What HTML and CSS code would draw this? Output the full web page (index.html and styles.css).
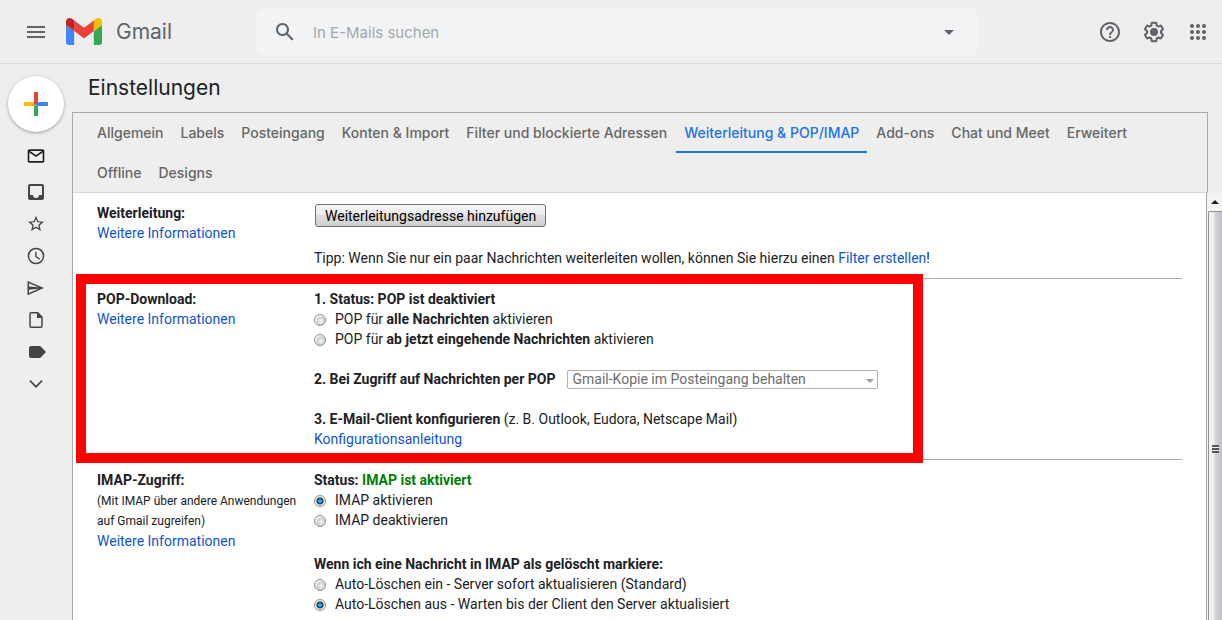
FILE: index.html
```html
<!DOCTYPE html>
<html lang="de">
<head>
<meta charset="utf-8">
<title>Einstellungen – Gmail</title>
<link rel="stylesheet" href="styles.css">
</head>
<body>
<header class="topbar">
  <button class="icon-btn menu-btn" type="button" aria-label="Hauptmenü"><svg width="24" height="24" viewBox="0 0 24 24"><path d="M3 18h18v-2H3v2zm0-5h18v-2H3v2zm0-7v2h18V6H3z"/></svg></button>
  <a class="brand" href="#">
    <svg width="36" height="27" viewBox="52 42 88 66" aria-hidden="true"><path fill="#4285f4" d="M58 108h14V74L52 59v43c0 3.320 2.690 6 6 6"/><path fill="#34a853" d="M120 108h14c3.320 0 6-2.690 6-6V59l-20 15"/><path fill="#fbbc04" d="M120 48v26l20-15v-8c0-7.420-8.470-11.650-14.400-7.200"/><path fill="#ea4335" d="M72 74V48l24 18 24-18v26L96 92"/><path fill="#c5221f" d="M52 51v8l20 15V48l-5.600-4.200c-5.940-4.450-14.400-.22-14.400 7.200"/></svg>
    <span class="brand-name">Gmail</span>
  </a>
  <form class="search">
    <button class="icon-btn" type="button" aria-label="Suchen"><svg width="24" height="24" viewBox="0 0 24 24"><path d="M20.490 19l-5.730-5.730C15.530 12.200 16 10.910 16 9.500 16 5.910 13.090 3 9.500 3S3 5.910 3 9.500 5.910 16 9.500 16c1.410 0 2.700-.47 3.770-1.240L19 20.490 20.490 19zM5 9.500C5 7.010 7.010 5 9.500 5S14 7.010 14 9.500 11.990 14 9.500 14 5 11.990 5 9.500z"/></svg></button>
    <input class="search-input" type="text" placeholder="In E-Mails suchen" aria-label="In E-Mails suchen">
    <button class="icon-btn" type="button" aria-label="Suchoptionen"><svg width="24" height="24" viewBox="0 0 24 24"><path d="M7 10l5 5 5-5z"/></svg></button>
  </form>
  <div class="tools">
    <button class="icon-btn" type="button" aria-label="Support"><svg width="24" height="24" viewBox="0 0 24 24"><path d="M11 18h2v-2h-2v2zm1-16C6.480 2 2 6.480 2 12s4.480 10 10 10 10-4.480 10-10S17.520 2 12 2zm0 18c-4.410 0-8-3.590-8-8s3.590-8 8-8 8 3.590 8 8-3.590 8-8 8zm0-14c-2.210 0-4 1.790-4 4h2c0-1.100.9-2 2-2s2 .9 2 2c0 2-3 1.750-3 5h2c0-2.250 3-2.500 3-5 0-2.210-1.790-4-4-4z"/></svg></button>
    <button class="icon-btn" type="button" aria-label="Einstellungen"><svg width="24" height="24" viewBox="0 0 24 24"><path d="M13.850 22.250h-3.700c-.74 0-1.360-.54-1.450-1.270l-.27-1.890c-.27-.14-.53-.29-.79-.46l-1.800.72c-.7.26-1.470-.03-1.810-.65L2.200 15.530c-.35-.66-.2-1.440.36-1.880l1.530-1.190c-.01-.15-.02-.3-.02-.46 0-.15.010-.31.020-.46l-1.520-1.190c-.59-.45-.74-1.260-.37-1.880l1.850-3.190c.34-.62 1.110-.9 1.790-.63l1.810.73c.26-.17.520-.32.780-.46l.27-1.910c.09-.7.710-1.250 1.440-1.250h3.700c.74 0 1.360.54 1.450 1.270l.27 1.890c.27.14.53.29.79.46l1.800-.72c.71-.26 1.480.03 1.820.65l1.840 3.180c.36.66.2 1.440-.36 1.880l-1.520 1.190c.1.150.2.300.2.460s-.01.310-.2.460l1.520 1.190c.56.45.72 1.230.37 1.860l-1.860 3.220c-.34.62-1.110.9-1.800.63l-1.800-.72c-.26.17-.52.320-.78.460l-.27 1.910c-.1.680-.72 1.220-1.460 1.220zm-3.230-2h2.760l.37-2.550.53-.22c.44-.18.88-.44 1.340-.78l.45-.34 2.380.96 1.380-2.400-2.030-1.580.07-.56c.03-.26.06-.51.060-.78s-.03-.53-.06-.78l-.07-.56 2.030-1.580-1.390-2.400-2.390.96-.45-.35c-.42-.32-.87-.58-1.330-.77l-.52-.22-.37-2.550h-2.760l-.37 2.550-.53.21c-.44.19-.88.44-1.340.79l-.45.33-2.380-.95-1.390 2.390 2.030 1.580-.07.56a7 7 0 0 0-.06.79c0 .26.020.53.060.78l.07.56-2.030 1.580 1.380 2.400 2.390-.96.45.35c.43.33.86.58 1.330.77l.53.22.38 2.550z"/><circle cx="12" cy="12" r="4"/></svg></button>
    <button class="icon-btn" type="button" aria-label="Google Apps"><svg width="24" height="24" viewBox="0 0 24 24"><circle cx="6" cy="6" r="2"/><circle cx="12" cy="6" r="2"/><circle cx="18" cy="6" r="2"/><circle cx="6" cy="12" r="2"/><circle cx="12" cy="12" r="2"/><circle cx="18" cy="12" r="2"/><circle cx="6" cy="18" r="2"/><circle cx="12" cy="18" r="2"/><circle cx="18" cy="18" r="2"/></svg></button>
  </div>
</header>
<div class="layout">
  <aside class="rail">
    <button class="compose" type="button" aria-label="Schreiben"><svg width="24" height="24" viewBox="0 0 24 24"><path fill="#34a853" d="M10 12h4v12h-4z"/><path fill="#4285f4" d="M12 10h12v4H12z"/><path fill="#fbbc04" d="M0 10h12v4H0z"/><path fill="#ea4335" d="M10 0h4v10l-4 4z"/></svg></button>
    <nav class="rail-nav" aria-label="Ordner">
      <a class="rail-link rail-first" href="#" aria-label="E-Mail"><svg width="20" height="20" viewBox="0 0 24 24"><path d="M20 4H4c-1.100 0-2 .9-2 2v12c0 1.100.9 2 2 2h16c1.100 0 2-.9 2-2V6c0-1.100-.9-2-2-2zm-.8 2L12 10.800 4.800 6h14.400zM4 18V7.870l8 5.330 8-5.330V18H4z"/></svg></a>
      <a class="rail-link" href="#" aria-label="Posteingang"><svg width="20" height="20" viewBox="0 0 20 20"><path d="M16 2H4a2 2 0 0 0-2 2v12a2 2 0 0 0 2 2h12a2 2 0 0 0 2-2V4a2 2 0 0 0-2-2zm0 11h-3a3 3 0 0 1-6 0H4V4h12v9z"/></svg></a>
      <a class="rail-link" href="#" aria-label="Markiert"><svg width="20" height="20" viewBox="0 0 20 20"><path d="M18 7.630l-5.740-.49L10 1.870 7.740 7.150 2 7.630l4.360 3.770L5.050 17 10 14.030 14.950 17l-1.310-5.600L18 7.630zM10 12.500l-3 1.810.79-3.400-2.640-2.290 3.480-.29L10 5.120l1.370 3.210 3.480.29-2.640 2.290.79 3.400-3-1.810z"/></svg></a>
      <a class="rail-link" href="#" aria-label="Zurückgestellt"><svg width="20" height="20" viewBox="0 0 24 24"><path d="M12 2a10 10 0 1 0 0 20 10 10 0 0 0 0-20zm0 18.200a8.200 8.200 0 1 1 0-16.400 8.200 8.200 0 0 1 0 16.400zM12.700 7H11v6l5 3.500.9-1.400-4.200-2.900z"/></svg></a>
      <a class="rail-link" href="#" aria-label="Gesendet"><svg width="20" height="20" viewBox="0 0 20 20"><path d="M1.500 3v14.200L18 10.100 1.500 3zM3 5.300l9.500 4.050L3 8.400V5.300zm0 6.500l9.500-.95L3 14.900v-3.100z"/></svg></a>
      <a class="rail-link" href="#" aria-label="Entwürfe"><svg width="20" height="20" viewBox="0 0 20 20"><path d="M12 2H5a1.700 1.700 0 0 0-1.700 1.700v12.600A1.700 1.700 0 0 0 5 18h10a1.700 1.700 0 0 0 1.700-1.700V6.700L12 2zm3.200 14.500H4.800v-13h6.200V8h4.200v8.500z"/></svg></a>
      <a class="rail-link" href="#" aria-label="Label"><svg width="20" height="20" viewBox="0 0 20 20"><path d="M13.500 4H5a2 2 0 0 0-2 2v8a2 2 0 0 0 2 2h8.500c.7 0 1.300-.3 1.700-.9L20 10l-4.800-5.100c-.4-.6-1-.9-1.700-.9z"/></svg></a>
      <a class="rail-link" href="#" aria-label="Mehr"><svg width="20" height="20" viewBox="0 0 20 20"><path d="M15.500 6L10 11.500 4.500 6l-1.200 1.200L10 13.900l6.700-6.700z"/></svg></a>
    </nav>
  </aside>
  <main class="main">
    <h1 class="title">Einstellungen</h1>
    <nav class="tabs" aria-label="Einstellungen">
      <a class="tab" href="#">Allgemein</a>
      <a class="tab" href="#">Labels</a>
      <a class="tab" href="#">Posteingang</a>
      <a class="tab" href="#">Konten &amp; Import</a>
      <a class="tab" href="#">Filter und blockierte Adressen</a>
      <a class="tab tab-active" href="#" aria-current="page">Weiterleitung &amp; POP/IMAP</a>
      <a class="tab" href="#">Add-ons</a>
      <a class="tab" href="#">Chat und Meet</a>
      <a class="tab" href="#">Erweitert</a>
      <a class="tab" href="#">Offline</a>
      <a class="tab" href="#">Designs</a>
    </nav>
    <div class="scroller">
      <div class="settings">
        <section class="setting">
          <div class="setting-label">
            <strong>Weiterleitung:</strong>
            <a class="link" href="#">Weitere Informationen</a>
          </div>
          <div class="setting-body forwarding">
            <button class="native-btn" type="button">Weiterleitungsadresse hinzufügen</button>
            <p>Tipp: Wenn Sie nur ein paar Nachrichten weiterleiten wollen, können Sie hierzu einen <a class="link" href="#">Filter erstellen</a>!</p>
          </div>
        </section>
        <section class="setting highlighted">
          <div class="setting-label">
            <strong>POP-Download:</strong>
            <a class="link" href="#">Weitere Informationen</a>
          </div>
          <div class="setting-body steps">
            <div>
              <p><strong>1. Status: POP ist deaktiviert</strong></p>
              <label class="option"><input class="radio" type="radio" name="pop"><span>POP für <strong>alle Nachrichten</strong> aktivieren</span></label>
              <label class="option"><input class="radio" type="radio" name="pop"><span>POP für <strong>ab jetzt eingehende Nachrichten</strong> aktivieren</span></label>
            </div>
            <div class="field">
              <label for="pop-action"><strong>2. Bei Zugriff auf Nachrichten per POP</strong></label>
              <span class="select-wrap">
                <select class="select" id="pop-action" disabled><option>Gmail-Kopie im Posteingang behalten</option></select>
                <svg class="select-arrow" width="8" height="4" viewBox="0 0 8 4" aria-hidden="true"><path d="M0 0h8L4 4z"/></svg>
              </span>
            </div>
            <div>
              <p><strong>3. E-Mail-Client konfigurieren</strong> (z. B. Outlook, Eudora, Netscape Mail)</p>
              <a class="link" href="#">Konfigurationsanleitung</a>
            </div>
          </div>
          <div class="marker" aria-hidden="true"></div>
        </section>
        <section class="setting">
          <div class="setting-label">
            <strong>IMAP-Zugriff:</strong>
            <small class="hint">(Mit IMAP über andere Anwendungen auf Gmail zugreifen)</small>
            <a class="link" href="#">Weitere Informationen</a>
          </div>
          <div class="setting-body imap">
            <div>
              <p><strong>Status: <span class="ok">IMAP ist aktiviert</span></strong></p>
              <label class="option"><input class="radio" type="radio" name="imap" checked><span>IMAP aktivieren</span></label>
              <label class="option"><input class="radio" type="radio" name="imap"><span>IMAP deaktivieren</span></label>
            </div>
            <div>
              <p><strong>Wenn ich eine Nachricht in IMAP als gelöscht markiere:</strong></p>
              <label class="option"><input class="radio" type="radio" name="expunge"><span>Auto-Löschen ein - Server sofort aktualisieren (Standard)</span></label>
              <label class="option"><input class="radio" type="radio" name="expunge" checked><span>Auto-Löschen aus - Warten bis der Client den Server aktualisiert</span></label>
            </div>
          </div>
        </section>
      </div>
      <div class="scrollbar" aria-hidden="true">
        <div class="scroll-up"><svg width="8" height="4" viewBox="0 0 8 4"><path d="M4 0l4 4H0z"/></svg></div>
        <div class="scroll-thumb"><span class="grip"></span></div>
      </div>
    </div>
  </main>
</div>
</body>
</html>
```

FILE: styles.css
```css
* { box-sizing: border-box; }

body {
  display: flex;
  flex-direction: column;
  height: 100vh;
  margin: 0;
  overflow: hidden;
  background: #eeeeee;
  color: #202124;
  font: 14px/20px Roboto, sans-serif;
}

h1, p { margin: 0; }
a { text-decoration: none; }
svg { display: block; fill: currentColor; flex: none; }

/* Top bar */
.topbar {
  display: flex;
  align-items: center;
  flex: none;
  height: 64px;
  padding: 0 12px 0 24px;
  border-bottom: 1px solid #dadada;
  color: #5f6368;
}
.icon-btn {
  display: flex;
  padding: 0;
  border: 0;
  background: none;
  color: #5f6368;
}
.brand {
  display: flex;
  align-items: center;
  gap: 14px;
  width: 208px;
  padding-left: 18px;
  color: #5f6368;
}
.brand-name { font: 21px/28px Inter, sans-serif; }
.search {
  display: flex;
  align-items: center;
  flex: 0 1 722px;
  height: 48px;
  padding: 0 17px;
  border-radius: 8px;
  background: #f1f3f4;
}
.search-input {
  flex: 1;
  min-width: 0;
  height: 32px;
  padding: 2px 16px 0;
  border: 0;
  outline: 0;
  background: none;
  font: 15px/20px Inter, sans-serif;
}
.search-input::placeholder { color: #a6a8aa; opacity: 1; }
.tools {
  display: flex;
  gap: 20px;
  margin-left: auto;
}

/* Left rail */
.layout {
  display: flex;
  flex: 1;
  min-height: 0;
}
.rail {
  flex: none;
  width: 72px;
  padding: 12px 8px;
}
.compose {
  display: flex;
  align-items: center;
  justify-content: center;
  width: 56px;
  height: 56px;
  padding: 0;
  border: 0;
  border-radius: 50%;
  background: #fff;
  box-shadow: 0 1px 2px rgba(60, 64, 67, 0.3), 0 1px 3px 1px rgba(60, 64, 67, 0.15);
}
.rail-nav {
  display: flex;
  flex-direction: column;
  padding-top: 8px;
}
.rail-link {
  display: flex;
  align-items: center;
  justify-content: center;
  height: 32px;
  color: #444;
}
.rail-first { margin-bottom: 4px; color: #202124; }

/* Settings */
.main {
  display: flex;
  flex: 1;
  flex-direction: column;
  min-width: 0;
}
.title {
  padding: 8px 16px;
  font: 21px/32px Inter, sans-serif;
}
.tabs {
  display: flex;
  flex-wrap: wrap;
  flex: none;
  column-gap: 1px;
  margin-right: 14px;
  padding: 0 24px 0 16px;
  border: 1px solid #a8a8a8;
  border-bottom: 0;
  box-shadow: inset 0 -1px #dadada;
}
.tab {
  height: 40px;
  padding: 0 8px;
  color: #666;
  font: 500 14px/40px Inter, sans-serif;
}
.tab-active {
  border-bottom: 2px solid #1a73e8;
  color: #1a73e8;
}
.scroller {
  display: flex;
  flex: 1;
  min-height: 0;
}
.settings {
  flex: 1;
  min-width: 0;
  padding: 0 24px;
  border: solid #a8a8a8;
  border-width: 0 1px;
  background: #fff;
}
.setting {
  display: grid;
  grid-template-columns: 217px 1fr;
  padding: 10px 0;
  border-bottom: 1px solid #a8a8a8;
}
.setting-label {
  display: flex;
  flex-direction: column;
  align-items: flex-start;
}
.setting-body {
  display: flex;
  flex-direction: column;
  align-items: flex-start;
}
.forwarding { gap: 21px; padding: 1px 0 0 0; }
.steps { gap: 20px; }
.imap { gap: 24px; }
.link { color: #1155cc; }
.ok { color: #008000; }
.hint {
  padding-top: 1px;
  font-size: 12px;
}
.native-btn {
  height: 23px;
  margin-left: 1px;
  padding: 0 9px;
  border: 1px solid #707070;
  border-radius: 3px;
  background: linear-gradient(#f4f4f4, #ebebeb 50%, #dddddd 50%, #cfcfcf);
  color: #000;
  font: 14px/20px Roboto, sans-serif;
}
.option {
  display: flex;
  align-items: center;
  gap: 9px;
}
.radio {
  width: 12px;
  height: 12px;
  margin: 2px 0 0;
  appearance: none;
  border: 1px solid #8e8f8f;
  border-radius: 50%;
  background: radial-gradient(circle at 60% 60%, #f0f0f0 1px, #c8cacc 4px, #f4f4f4 5px);
}
.radio:checked {
  background: radial-gradient(circle, #62c8f0 0, #1a7ab0 2px, #0b2f4d 3px, #e8eaec 4px);
}
.field {
  display: flex;
  align-items: center;
  gap: 12px;
}
.select-wrap {
  position: relative;
  display: flex;
}
.select {
  width: 311px;
  height: 19px;
  padding: 0 4px;
  appearance: none;
  border: 1px solid #b0b0b0;
  border-radius: 2px;
  background: #fff;
  color: #6d6d6d;
  font: 14px/17px Roboto, sans-serif;
  opacity: 1;
}
.select-arrow {
  position: absolute;
  top: 9px;
  right: 4px;
  color: #a0a0a0;
}
.highlighted { position: relative; }
.marker {
  position: absolute;
  top: -5px;
  bottom: -4px;
  left: -21px;
  width: 847px;
  border: 10px solid #ff0000;
  pointer-events: none;
}

/* Scrollbar */
.scrollbar {
  display: flex;
  flex-direction: column;
  flex: none;
  width: 15px;
  padding-left: 1px;
  background: #f4f4f4;
}
.scroll-up {
  display: flex;
  align-items: center;
  justify-content: center;
  height: 18px;
}
.scroll-thumb {
  display: flex;
  flex: 1;
  align-items: center;
  justify-content: center;
  padding-top: 66px;
  border: solid #909090;
  border-width: 1px 0 0 1px;
  border-radius: 2px 0 0 0;
  background: linear-gradient(90deg, #f5f5f5, #ebebed 40%, #d2d2d6 50%, #c0c0c8);
}
.grip {
  width: 7px;
  height: 8px;
  background: repeating-linear-gradient(#555 0 2px, #eee 2px 3px);
}
```
